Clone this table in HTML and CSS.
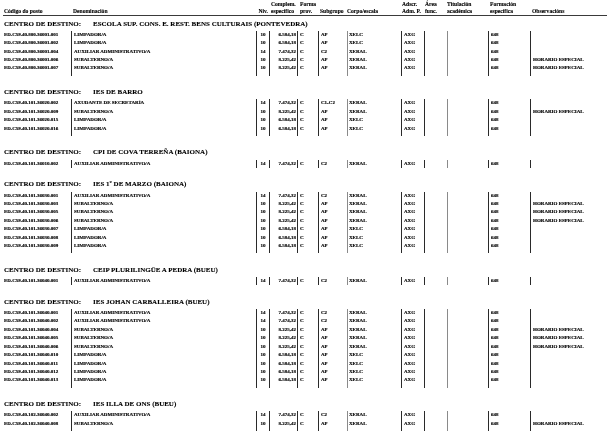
FILE: index.html
```html
<!DOCTYPE html>
<html lang="gl">
<head>
<meta charset="utf-8">
<title>Centros de destino</title>
<link rel="stylesheet" href="styles.css">
</head>
<body>
<div class="page">
  <div class="head">
    <div class="hc pl1"><span>&nbsp;</span><span>Código do posto</span></div>
    <div class="hc pl2"><span>&nbsp;</span><span>Denominación</span></div>
    <div class="hc right"><span>&nbsp;</span><span>Niv.</span></div>
    <div class="hc pl2"><span>Complem.</span><span>específico</span></div>
    <div class="hc pl3"><span>Forma</span><span>prov.</span></div>
    <div class="hc pl2"><span>&nbsp;</span><span>Subgrupo</span></div>
    <div class="hc"><span>&nbsp;</span><span>Corpo/escala</span></div>
    <div class="hc pl1"><span>Adscr.</span><span>Adm. P.</span></div>
    <div class="hc pl1"><span>Área</span><span>func.</span></div>
    <div class="hc"><span>Titulación</span><span>académica</span></div>
    <div class="hc pl2"><span>Formación</span><span>específica</span></div>
    <div class="hc pl2"><span>&nbsp;</span><span>Observacións</span></div>
  </div>

  <div class="sections">

    <section class="centro">
      <h2 class="title"><span class="lbl">CENTRO DE DESTINO:</span><span>ESCOLA SUP. CONS. E. REST. BENS CULTURAIS (PONTEVEDRA)</span></h2>
      <div class="rows">
        <div class="row"><span class="c code">ED.C59.40.800.36001.001</span><span class="c den">LIMPADOR/A</span><span class="c niv">10</span><span class="c comp">6.584,18</span><span class="c fp">C</span><span class="c sg">AP</span><span class="c ce">XELC</span><span class="c ad">AXG</span><span class="c ar"></span><span class="c ti"></span><span class="c fo">648</span><span class="c ob"></span></div>
        <div class="row"><span class="c code">ED.C59.40.800.36001.002</span><span class="c den">LIMPADOR/A</span><span class="c niv">10</span><span class="c comp">6.584,18</span><span class="c fp">C</span><span class="c sg">AP</span><span class="c ce">XELC</span><span class="c ad">AXG</span><span class="c ar"></span><span class="c ti"></span><span class="c fo">648</span><span class="c ob"></span></div>
        <div class="row"><span class="c code">ED.C59.40.800.36001.004</span><span class="c den">AUXILIAR ADMINISTRATIVO/A</span><span class="c niv">14</span><span class="c comp">7.474,32</span><span class="c fp">C</span><span class="c sg">C2</span><span class="c ce">XERAL</span><span class="c ad">AXG</span><span class="c ar"></span><span class="c ti"></span><span class="c fo">648</span><span class="c ob"></span></div>
        <div class="row"><span class="c code">ED.C59.40.800.36001.006</span><span class="c den">SUBALTERNO/A</span><span class="c niv">10</span><span class="c comp">8.225,42</span><span class="c fp">C</span><span class="c sg">AP</span><span class="c ce">XERAL</span><span class="c ad">AXG</span><span class="c ar"></span><span class="c ti"></span><span class="c fo">648</span><span class="c ob">HORARIO ESPECIAL</span></div>
        <div class="row"><span class="c code">ED.C59.40.800.36001.007</span><span class="c den">SUBALTERNO/A</span><span class="c niv">10</span><span class="c comp">8.225,42</span><span class="c fp">C</span><span class="c sg">AP</span><span class="c ce">XERAL</span><span class="c ad">AXG</span><span class="c ar"></span><span class="c ti"></span><span class="c fo">648</span><span class="c ob">HORARIO ESPECIAL</span></div>
      </div>
    </section>

    <section class="centro">
      <h2 class="title"><span class="lbl">CENTRO DE DESTINO:</span><span>IES DE BARRO</span></h2>
      <div class="rows">
        <div class="row"><span class="c code">ED.C59.40.101.36020.002</span><span class="c den">AXUDANTE DE SECRETARÍA</span><span class="c niv">14</span><span class="c comp">7.474,32</span><span class="c fp">C</span><span class="c sg">C1-C2</span><span class="c ce">XERAL</span><span class="c ad">AXG</span><span class="c ar"></span><span class="c ti"></span><span class="c fo">648</span><span class="c ob"></span></div>
        <div class="row"><span class="c code">ED.C59.40.101.36020.009</span><span class="c den">SUBALTERNO/A</span><span class="c niv">10</span><span class="c comp">8.225,42</span><span class="c fp">C</span><span class="c sg">AP</span><span class="c ce">XERAL</span><span class="c ad">AXG</span><span class="c ar"></span><span class="c ti"></span><span class="c fo">648</span><span class="c ob">HORARIO ESPECIAL</span></div>
        <div class="row"><span class="c code">ED.C59.40.101.36020.015</span><span class="c den">LIMPADOR/A</span><span class="c niv">10</span><span class="c comp">6.584,18</span><span class="c fp">C</span><span class="c sg">AP</span><span class="c ce">XELC</span><span class="c ad">AXG</span><span class="c ar"></span><span class="c ti"></span><span class="c fo">648</span><span class="c ob"></span></div>
        <div class="row"><span class="c code">ED.C59.40.101.36020.016</span><span class="c den">LIMPADOR/A</span><span class="c niv">10</span><span class="c comp">6.584,18</span><span class="c fp">C</span><span class="c sg">AP</span><span class="c ce">XELC</span><span class="c ad">AXG</span><span class="c ar"></span><span class="c ti"></span><span class="c fo">648</span><span class="c ob"></span></div>
      </div>
    </section>

    <section class="centro">
      <h2 class="title"><span class="lbl">CENTRO DE DESTINO:</span><span>CPI DE COVA TERREÑA (BAIONA)</span></h2>
      <div class="rows">
        <div class="row"><span class="c code">ED.C59.40.101.36010.002</span><span class="c den">AUXILIAR ADMINISTRATIVO/A</span><span class="c niv">14</span><span class="c comp">7.474,32</span><span class="c fp">C</span><span class="c sg">C2</span><span class="c ce">XERAL</span><span class="c ad">AXG</span><span class="c ar"></span><span class="c ti"></span><span class="c fo">648</span><span class="c ob"></span></div>
      </div>
    </section>

    <section class="centro">
      <h2 class="title"><span class="lbl">CENTRO DE DESTINO:</span><span>IES 1º DE MARZO (BAIONA)</span></h2>
      <div class="rows">
        <div class="row"><span class="c code">ED.C59.40.101.36030.001</span><span class="c den">AUXILIAR ADMINISTRATIVO/A</span><span class="c niv">14</span><span class="c comp">7.474,32</span><span class="c fp">C</span><span class="c sg">C2</span><span class="c ce">XERAL</span><span class="c ad">AXG</span><span class="c ar"></span><span class="c ti"></span><span class="c fo">648</span><span class="c ob"></span></div>
        <div class="row"><span class="c code">ED.C59.40.101.36030.003</span><span class="c den">SUBALTERNO/A</span><span class="c niv">10</span><span class="c comp">8.225,42</span><span class="c fp">C</span><span class="c sg">AP</span><span class="c ce">XERAL</span><span class="c ad">AXG</span><span class="c ar"></span><span class="c ti"></span><span class="c fo">648</span><span class="c ob">HORARIO ESPECIAL</span></div>
        <div class="row"><span class="c code">ED.C59.40.101.36030.005</span><span class="c den">SUBALTERNO/A</span><span class="c niv">10</span><span class="c comp">8.225,42</span><span class="c fp">C</span><span class="c sg">AP</span><span class="c ce">XERAL</span><span class="c ad">AXG</span><span class="c ar"></span><span class="c ti"></span><span class="c fo">648</span><span class="c ob">HORARIO ESPECIAL</span></div>
        <div class="row"><span class="c code">ED.C59.40.101.36030.006</span><span class="c den">SUBALTERNO/A</span><span class="c niv">10</span><span class="c comp">8.225,42</span><span class="c fp">C</span><span class="c sg">AP</span><span class="c ce">XERAL</span><span class="c ad">AXG</span><span class="c ar"></span><span class="c ti"></span><span class="c fo">648</span><span class="c ob">HORARIO ESPECIAL</span></div>
        <div class="row"><span class="c code">ED.C59.40.101.36030.007</span><span class="c den">LIMPADOR/A</span><span class="c niv">10</span><span class="c comp">6.584,18</span><span class="c fp">C</span><span class="c sg">AP</span><span class="c ce">XELC</span><span class="c ad">AXG</span><span class="c ar"></span><span class="c ti"></span><span class="c fo">648</span><span class="c ob"></span></div>
        <div class="row"><span class="c code">ED.C59.40.101.36030.008</span><span class="c den">LIMPADOR/A</span><span class="c niv">10</span><span class="c comp">6.584,18</span><span class="c fp">C</span><span class="c sg">AP</span><span class="c ce">XELC</span><span class="c ad">AXG</span><span class="c ar"></span><span class="c ti"></span><span class="c fo">648</span><span class="c ob"></span></div>
        <div class="row"><span class="c code">ED.C59.40.101.36030.009</span><span class="c den">LIMPADOR/A</span><span class="c niv">10</span><span class="c comp">6.584,18</span><span class="c fp">C</span><span class="c sg">AP</span><span class="c ce">XELC</span><span class="c ad">AXG</span><span class="c ar"></span><span class="c ti"></span><span class="c fo">648</span><span class="c ob"></span></div>
      </div>
    </section>

    <section class="centro">
      <h2 class="title"><span class="lbl">CENTRO DE DESTINO:</span><span>CEIP PLURILINGÜE A PEDRA (BUEU)</span></h2>
      <div class="rows">
        <div class="row"><span class="c code">ED.C59.40.101.36040.001</span><span class="c den">AUXILIAR ADMINISTRATIVO/A</span><span class="c niv">14</span><span class="c comp">7.474,32</span><span class="c fp">C</span><span class="c sg">C2</span><span class="c ce">XERAL</span><span class="c ad">AXG</span><span class="c ar"></span><span class="c ti"></span><span class="c fo">648</span><span class="c ob"></span></div>
      </div>
    </section>

    <section class="centro">
      <h2 class="title"><span class="lbl">CENTRO DE DESTINO:</span><span>IES JOHAN CARBALLEIRA (BUEU)</span></h2>
      <div class="rows">
        <div class="row"><span class="c code">ED.C59.40.101.36040.001</span><span class="c den">AUXILIAR ADMINISTRATIVO/A</span><span class="c niv">14</span><span class="c comp">7.474,32</span><span class="c fp">C</span><span class="c sg">C2</span><span class="c ce">XERAL</span><span class="c ad">AXG</span><span class="c ar"></span><span class="c ti"></span><span class="c fo">648</span><span class="c ob"></span></div>
        <div class="row"><span class="c code">ED.C59.40.101.36040.002</span><span class="c den">AUXILIAR ADMINISTRATIVO/A</span><span class="c niv">14</span><span class="c comp">7.474,32</span><span class="c fp">C</span><span class="c sg">C2</span><span class="c ce">XERAL</span><span class="c ad">AXG</span><span class="c ar"></span><span class="c ti"></span><span class="c fo">648</span><span class="c ob"></span></div>
        <div class="row"><span class="c code">ED.C59.40.101.36040.004</span><span class="c den">SUBALTERNO/A</span><span class="c niv">10</span><span class="c comp">8.225,42</span><span class="c fp">C</span><span class="c sg">AP</span><span class="c ce">XERAL</span><span class="c ad">AXG</span><span class="c ar"></span><span class="c ti"></span><span class="c fo">648</span><span class="c ob">HORARIO ESPECIAL</span></div>
        <div class="row"><span class="c code">ED.C59.40.101.36040.005</span><span class="c den">SUBALTERNO/A</span><span class="c niv">10</span><span class="c comp">8.225,42</span><span class="c fp">C</span><span class="c sg">AP</span><span class="c ce">XERAL</span><span class="c ad">AXG</span><span class="c ar"></span><span class="c ti"></span><span class="c fo">648</span><span class="c ob">HORARIO ESPECIAL</span></div>
        <div class="row"><span class="c code">ED.C59.40.101.36040.006</span><span class="c den">SUBALTERNO/A</span><span class="c niv">10</span><span class="c comp">8.225,42</span><span class="c fp">C</span><span class="c sg">AP</span><span class="c ce">XERAL</span><span class="c ad">AXG</span><span class="c ar"></span><span class="c ti"></span><span class="c fo">648</span><span class="c ob">HORARIO ESPECIAL</span></div>
        <div class="row"><span class="c code">ED.C59.40.101.36040.010</span><span class="c den">LIMPADOR/A</span><span class="c niv">10</span><span class="c comp">6.584,18</span><span class="c fp">C</span><span class="c sg">AP</span><span class="c ce">XELC</span><span class="c ad">AXG</span><span class="c ar"></span><span class="c ti"></span><span class="c fo">648</span><span class="c ob"></span></div>
        <div class="row"><span class="c code">ED.C59.40.101.36040.011</span><span class="c den">LIMPADOR/A</span><span class="c niv">10</span><span class="c comp">6.584,18</span><span class="c fp">C</span><span class="c sg">AP</span><span class="c ce">XELC</span><span class="c ad">AXG</span><span class="c ar"></span><span class="c ti"></span><span class="c fo">648</span><span class="c ob"></span></div>
        <div class="row"><span class="c code">ED.C59.40.101.36040.012</span><span class="c den">LIMPADOR/A</span><span class="c niv">10</span><span class="c comp">6.584,18</span><span class="c fp">C</span><span class="c sg">AP</span><span class="c ce">XELC</span><span class="c ad">AXG</span><span class="c ar"></span><span class="c ti"></span><span class="c fo">648</span><span class="c ob"></span></div>
        <div class="row"><span class="c code">ED.C59.40.101.36040.013</span><span class="c den">LIMPADOR/A</span><span class="c niv">10</span><span class="c comp">6.584,18</span><span class="c fp">C</span><span class="c sg">AP</span><span class="c ce">XELC</span><span class="c ad">AXG</span><span class="c ar"></span><span class="c ti"></span><span class="c fo">648</span><span class="c ob"></span></div>
      </div>
    </section>

    <section class="centro">
      <h2 class="title"><span class="lbl">CENTRO DE DESTINO:</span><span>IES ILLA DE ONS (BUEU)</span></h2>
      <div class="rows">
        <div class="row"><span class="c code">ED.C59.40.102.36040.002</span><span class="c den">AUXILIAR ADMINISTRATIVO/A</span><span class="c niv">14</span><span class="c comp">7.474,32</span><span class="c fp">C</span><span class="c sg">C2</span><span class="c ce">XERAL</span><span class="c ad">AXG</span><span class="c ar"></span><span class="c ti"></span><span class="c fo">648</span><span class="c ob"></span></div>
        <div class="row"><span class="c code">ED.C59.40.102.36040.008</span><span class="c den">SUBALTERNO/A</span><span class="c niv">10</span><span class="c comp">8.225,42</span><span class="c fp">C</span><span class="c sg">AP</span><span class="c ce">XERAL</span><span class="c ad">AXG</span><span class="c ar"></span><span class="c ti"></span><span class="c fo">648</span><span class="c ob">HORARIO ESPECIAL</span></div>
      </div>
    </section>

  </div>
</div>
</body>
</html>
```

FILE: styles.css
```css
html, body {
  margin: 0;
  padding: 0;
  background: #ffffff;
}

body {
  font-family: "Liberation Serif", "Times New Roman", serif;
  font-weight: bold;
  color: #000000;
}

.page {
  width: 604px;
  padding: 1px 0 0 3px;
  background: #ffffff;
  filter: grayscale(1);
}

/* column header */
.head {
  display: grid;
  grid-template-columns: 68px 185px 13px 28px 21px 29px 54px 23px 23px 41px 42px 77px;
  border-bottom: 1px solid #3a3a3a;
  font-size: 5.6px;
  line-height: 7px;
  -webkit-text-stroke: 0.1px #000000;
}

.hc {
  display: flex;
  flex-direction: column;
  white-space: nowrap;
}

.hc.right { align-items: flex-end; padding-right: 1px; }
.pl1 { padding-left: 1px; }
.pl2 { padding-left: 2px; }
.pl3 { padding-left: 3px; }

/* sections */
.sections {
  display: flex;
  flex-direction: column;
  gap: 12.3px;
  padding-top: 3.5px;
}

.title {
  display: flex;
  margin: 0 0 2.3px 0;
  padding-left: 1px;
  font-size: 7px;
  line-height: 9px;
  font-weight: bold;
  white-space: nowrap;
  -webkit-text-stroke: 0.1px #000000;
}

.title .lbl {
  width: 89px;
  flex: none;
}

.rows {
  display: grid;
  grid-template-columns: 68px 185px 13px 28px 21px 29px 54px 23px 23px 41px 42px 77px;
  font-size: 5px;
  -webkit-text-stroke: 0.15px #000000;
}

.row { display: contents; }

.c {
  line-height: 8.4px;
  white-space: nowrap;
  padding-left: 2px;
}

.row:last-child:not(:first-child) > .c {
  padding-bottom: 3px;
}

.code { padding-left: 1px; }

.den, .niv, .comp, .fp, .sg, .ad, .ar, .fo, .ob {
  border-left: 1px solid #2a2a2a;
}

.ce, .ti {
  border-left: 1px solid #8a8a8a;
}

.niv {
  padding-left: 0;
  text-align: center;
}

.comp {
  padding-left: 0;
  padding-right: 1px;
  text-align: right;
}

.fp { padding-left: 2px; }
.ce { padding-left: 1px; }
```
